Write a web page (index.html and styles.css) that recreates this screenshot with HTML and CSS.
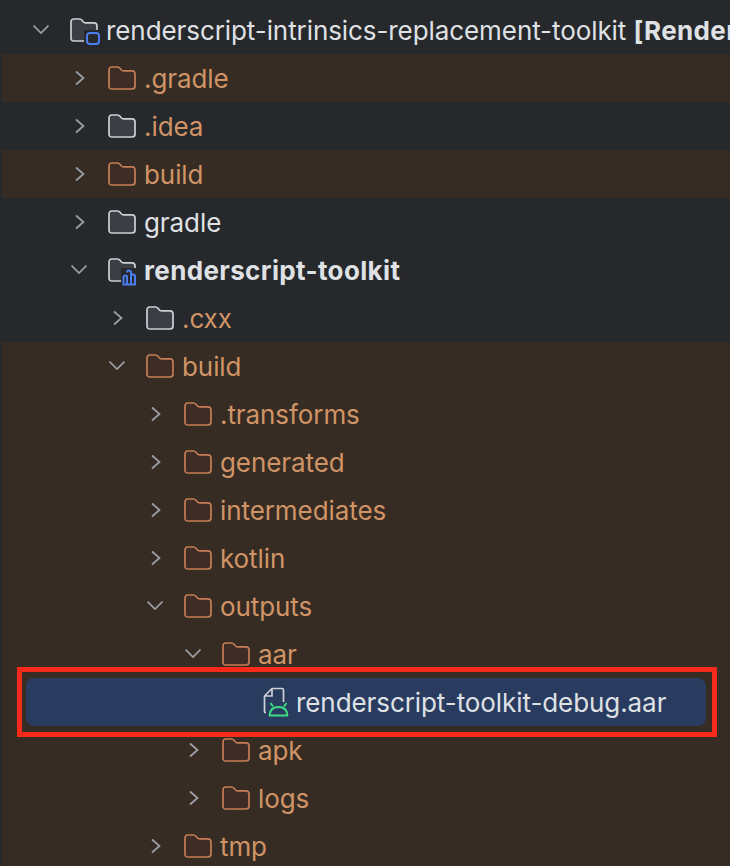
FILE: index.html
```html
<!DOCTYPE html>
<html lang="en">
<head>
    <meta charset="UTF-8">
    <title>Project</title>
    <link rel="stylesheet" href="styles.css">
</head>
<body>
    <svg class="defs" width="0" height="0">
        <symbol id="arrow-right" viewBox="0 0 12 16"><path d="M2 1.5 L9.5 8 L2 14.500" fill="none" stroke="currentColor" stroke-width="1.700"/></symbol>
        <symbol id="arrow-down" viewBox="0 0 16 12"><path d="M0.500 1.500 L8 9 L15.500 1.500" fill="none" stroke="currentColor" stroke-width="1.700"/></symbol>
        <symbol id="folder" viewBox="0 0 28 24"><path d="M1 4 Q1 1 4 1 H9.500 Q11 1 12 2.200 L13.500 4 Q14.200 4.800 15.500 4.800 H24 Q27 4.800 27 7.800 V20 Q27 23 24 23 H4 Q1 23 1 20 Z" stroke-width="1.700"/></symbol>
    </svg>

    <div class="tree">
        <div class="row dark l0">
            <svg class="arrow down"><use href="#arrow-down"/></svg>
            <svg class="icon badge" viewBox="0 0 32 28">
                <path class="gray-folder" d="M1 4 Q1 1 4 1 H9.500 Q11 1 12 2.200 L13.500 4 Q14.200 4.800 15.500 4.800 H24 Q27 4.800 27 7.800 V20 Q27 23 24 23 H4 Q1 23 1 20 Z" stroke-width="1.700"/>
                <rect x="14" y="12" width="17" height="16" fill="#26282b"/>
                <rect x="17" y="15" width="12" height="11" rx="3" fill="none" stroke="#4a7df0" stroke-width="2"/>
            </svg>
            <span class="name">renderscript-intrinsics-replacement-toolkit <b>[Render</b></span>
        </div>
        <div class="row brown l1">
            <svg class="arrow"><use href="#arrow-right"/></svg>
            <svg class="icon folder-brown"><use href="#folder"/></svg>
            <span class="name orange">.gradle</span>
        </div>
        <div class="row dark l1">
            <svg class="arrow"><use href="#arrow-right"/></svg>
            <svg class="icon folder-gray"><use href="#folder"/></svg>
            <span class="name orange">.idea</span>
        </div>
        <div class="row brown l1">
            <svg class="arrow"><use href="#arrow-right"/></svg>
            <svg class="icon folder-brown"><use href="#folder"/></svg>
            <span class="name orange">build</span>
        </div>
        <div class="row dark l1">
            <svg class="arrow"><use href="#arrow-right"/></svg>
            <svg class="icon folder-gray"><use href="#folder"/></svg>
            <span class="name">gradle</span>
        </div>
        <div class="row dark l1">
            <svg class="arrow down"><use href="#arrow-down"/></svg>
            <svg class="icon badge" viewBox="0 0 32 28">
                <path class="gray-folder" d="M1 4 Q1 1 4 1 H9.500 Q11 1 12 2.200 L13.500 4 Q14.200 4.800 15.500 4.800 H24 Q27 4.800 27 7.800 V20 Q27 23 24 23 H4 Q1 23 1 20 Z" stroke-width="1.700"/>
                <rect x="13" y="10" width="19" height="18" fill="#26282b"/>
                <path d="M15.500 26 V19 Q15.500 17.500 17.500 17.500 Q19 17.500 19 19 V26 M19 14.500 Q19 12.500 21 12.500 Q23 12.500 23 14.500 V26 M23 18 Q23 16.500 25 16.500 Q27 16.500 27 18 V26 M14.500 26.500 H28" fill="none" stroke="#4a7df0" stroke-width="2"/>
            </svg>
            <span class="name"><b>renderscript-toolkit</b></span>
        </div>
        <div class="row dark l2">
            <svg class="arrow"><use href="#arrow-right"/></svg>
            <svg class="icon folder-gray"><use href="#folder"/></svg>
            <span class="name orange">.cxx</span>
        </div>
        <div class="row brown l2">
            <svg class="arrow down"><use href="#arrow-down"/></svg>
            <svg class="icon folder-brown"><use href="#folder"/></svg>
            <span class="name orange">build</span>
        </div>
        <div class="row brown l3">
            <svg class="arrow"><use href="#arrow-right"/></svg>
            <svg class="icon folder-brown"><use href="#folder"/></svg>
            <span class="name orange">.transforms</span>
        </div>
        <div class="row brown l3">
            <svg class="arrow"><use href="#arrow-right"/></svg>
            <svg class="icon folder-brown"><use href="#folder"/></svg>
            <span class="name orange">generated</span>
        </div>
        <div class="row brown l3">
            <svg class="arrow"><use href="#arrow-right"/></svg>
            <svg class="icon folder-brown"><use href="#folder"/></svg>
            <span class="name orange">intermediates</span>
        </div>
        <div class="row brown l3">
            <svg class="arrow"><use href="#arrow-right"/></svg>
            <svg class="icon folder-brown"><use href="#folder"/></svg>
            <span class="name orange">kotlin</span>
        </div>
        <div class="row brown l3">
            <svg class="arrow down"><use href="#arrow-down"/></svg>
            <svg class="icon folder-brown"><use href="#folder"/></svg>
            <span class="name orange">outputs</span>
        </div>
        <div class="row brown l4">
            <svg class="arrow down"><use href="#arrow-down"/></svg>
            <svg class="icon folder-brown"><use href="#folder"/></svg>
            <span class="name orange">aar</span>
        </div>
        <div class="row brown file-row">
            <div class="selected">
                <svg class="file-icon" viewBox="0 0 28 30">
                    <path d="M3 25.500 H2 Q1.500 25.500 1.500 24.500 V9 L9 1.500 H19 Q20.500 1.500 20.500 3 V15 M9 1.500 V9 H1.500" fill="none" stroke="#ced0d6" stroke-width="1.700"/>
                    <path d="M7.500 16 L10 19.500 M23.500 16 L21 19.500 M6 28.500 H25 M6.500 28.500 Q7 20 15.500 20 Q24 20 24.500 28.500" fill="none" stroke="#3ddc84" stroke-width="2"/>
                </svg>
                <span class="name">renderscript-toolkit-debug.aar</span>
            </div>
        </div>
        <div class="row brown l4">
            <svg class="arrow"><use href="#arrow-right"/></svg>
            <svg class="icon folder-brown"><use href="#folder"/></svg>
            <span class="name orange">apk</span>
        </div>
        <div class="row brown l4">
            <svg class="arrow"><use href="#arrow-right"/></svg>
            <svg class="icon folder-brown"><use href="#folder"/></svg>
            <span class="name orange">logs</span>
        </div>
        <div class="row brown l3">
            <svg class="arrow"><use href="#arrow-right"/></svg>
            <svg class="icon folder-brown"><use href="#folder"/></svg>
            <span class="name orange">tmp</span>
        </div>

        <div class="highlight"></div>
    </div>
</body>
</html>
```

FILE: styles.css
```css
html, body {
    margin: 0;
    padding: 0;
    height: 100%;
    overflow: hidden;
    background-color: #26282b;
}

.defs {
    display: block;
    height: 0;
}

.tree {
    position: relative;
    height: 866px;
    padding: 6px 0 0 2px;
    box-sizing: border-box;
    overflow: hidden;
    font-family: Inter, "Liberation Sans", sans-serif;
    font-size: 26px;
    color: #dfe1e5;
}

.row {
    display: flex;
    align-items: center;
    height: 48px;
    white-space: nowrap;
}

.dark {
    background-color: #26282b;
}

.brown {
    background-color: #362c23;
}

.l0 { padding-left: 31px; }
.l1 { padding-left: 69px; }
.l2 { padding-left: 107px; }
.l3 { padding-left: 145px; }
.l4 { padding-left: 183px; }

.arrow {
    width: 12px;
    height: 16px;
    margin-left: 3px;
    margin-right: 22px;
    color: #9da0a8;
    flex: none;
}

.arrow.down {
    width: 16px;
    height: 12px;
    margin-left: 0;
    margin-right: 21px;
}

.icon {
    width: 28px;
    height: 24px;
    margin-right: 8px;
    flex: none;
    overflow: visible;
}

.icon.badge {
    width: 32px;
    height: 28px;
    margin-right: 4px;
    margin-top: 4px;
}

.folder-brown {
    fill: #3e2c26;
    stroke: #c77d55;
}

.folder-gray,
.gray-folder {
    fill: #3c3e45;
    stroke: #ced0d6;
}

.name {
    letter-spacing: -0.08px;
}

.name b {
    font-weight: 700;
    letter-spacing: 0.35px;
}

.orange {
    color: #d09466;
}

.file-row {
    padding-left: 24px;
}

.selected {
    display: flex;
    align-items: center;
    box-sizing: border-box;
    width: 680px;
    height: 48px;
    padding-left: 237px;
    border-radius: 8px;
    background-color: #2a3b60;
}

.file-icon {
    width: 28px;
    height: 30px;
    margin-right: 5px;
    flex: none;
}

/* red box drawn over the screenshot */
.highlight {
    position: absolute;
    left: 17px;
    top: 667px;
    width: 700px;
    height: 70px;
    box-sizing: border-box;
    border: 5px solid #f52a1a;
}
```
